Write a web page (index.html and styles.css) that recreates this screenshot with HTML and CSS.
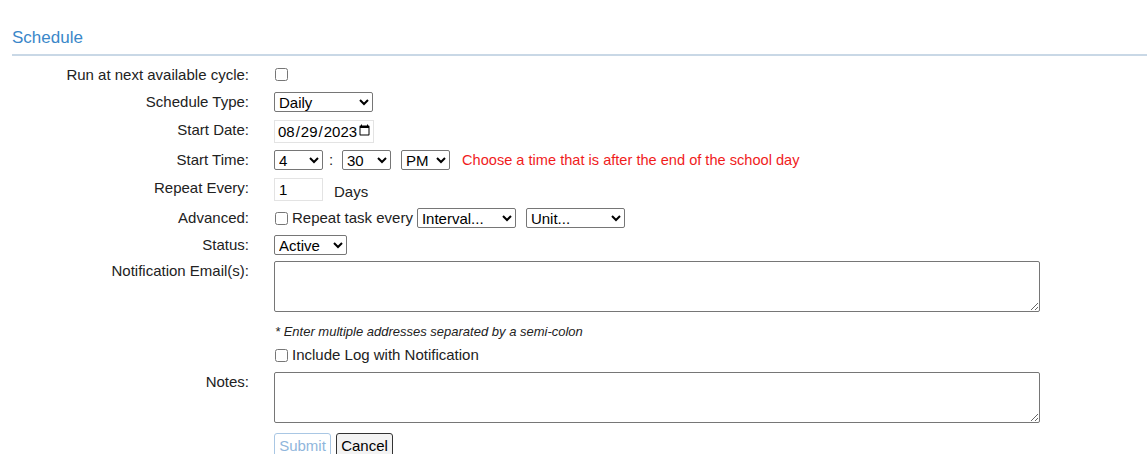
FILE: index.html
```html
<!DOCTYPE html>
<html lang="en">
<head>
    <meta charset="UTF-8">
    <title>Schedule</title>
    <link rel="stylesheet" href="styles.css">
</head>
<body>
  <div class="title">Schedule</div>
  <form class="form">
    <div class="row h27">
      <label class="label">Run at next available cycle:</label>
      <div class="field"><input type="checkbox" class="check"></div>
    </div>
    <div class="row h28">
      <label class="label">Schedule Type:</label>
      <div class="field">
        <select class="sel w99">
          <option>Daily</option>
          <option>Weekly</option>
          <option>Monthly</option>
        </select>
      </div>
    </div>
    <div class="row h30">
      <label class="label">Start Date:</label>
      <div class="field"><input type="date" class="date" value="2023-08-29"></div>
    </div>
    <div class="row h28">
      <label class="label">Start Time:</label>
      <div class="field">
        <select class="sel w49"><option>4</option></select>
        <span class="colon">:</span>
        <select class="sel w49"><option>30</option></select>
        <select class="sel w49 ml10"><option>PM</option></select>
        <span class="warn">Choose a time that is after the end of the school day</span>
      </div>
    </div>
    <div class="row h30">
      <label class="label">Repeat Every:</label>
      <div class="field">
        <input type="text" class="num" value="1">
        <span class="unit">Days</span>
      </div>
    </div>
    <div class="row h27">
      <label class="label">Advanced:</label>
      <div class="field">
        <input type="checkbox" class="check mid">
        <span class="inline">Repeat task every</span>
        <select class="sel w99"><option>Interval...</option></select>
        <select class="sel w99 ml10"><option>Unit...</option></select>
      </div>
    </div>
    <div class="row h26">
      <label class="label">Status:</label>
      <div class="field">
        <select class="sel w73"><option>Active</option><option>Inactive</option></select>
      </div>
    </div>
    <div class="row h61">
      <label class="label">Notification Email(s):</label>
      <div class="field"><textarea class="area"></textarea></div>
    </div>
    <div class="row h24">
      <span class="label"></span>
      <div class="field hint">* Enter multiple addresses separated by a semi-colon</div>
    </div>
    <div class="row h26">
      <span class="label"></span>
      <div class="field">
        <input type="checkbox" class="check">
        <span class="inline">Include Log with Notification</span>
      </div>
    </div>
    <div class="row h61">
      <label class="label">Notes:</label>
      <div class="field"><textarea class="area"></textarea></div>
    </div>
    <div class="row">
      <span class="label"></span>
      <div class="field">
        <button type="button" class="btn submit" disabled>Submit</button>
        <button type="button" class="btn cancel">Cancel</button>
      </div>
    </div>
  </form>
</body>
</html>
```

FILE: styles.css
```css
* {
  box-sizing: border-box;
}
body {
  margin: 0;
  font-family: "Liberation Sans", Arial, sans-serif;
  font-size: 15px;
  color: #222;
  background: #fff;
}
.title {
  margin-left: 12px;
  padding-top: 28px;
  padding-bottom: 6px;
  line-height: 20px;
  font-size: 17px;
  color: #3a87c9;
  border-bottom: 2px solid #c9d8e6;
}
.form {
  margin-top: 9px;
}
.row {
  display: flex;
  align-items: flex-start;
}
.h24 {
  height: 24px;
}
.h26 {
  height: 26px;
}
.h27 {
  height: 27px;
}
.h28 {
  height: 28px;
}
.h30 {
  height: 30px;
}
.h61 {
  height: 61px;
}
.label {
  width: 249px;
  flex-shrink: 0;
  margin-right: 25px;
  padding-top: 1px;
  text-align: right;
  line-height: 18px;
}
.field {
  display: flex;
  align-items: center;
  line-height: 18px;
}
.check {
  width: 13px;
  height: 13px;
  margin: 3px 0 2px 1px;
  align-self: flex-start;
}
.check.mid {
  align-self: center;
  margin: 0 0 0 1px;
}
.sel {
  height: 20px;
  font-family: "Liberation Sans", Arial, sans-serif;
  font-size: 15px;
  color: #000;
  background: #fff;
  border: 1px solid #767676;
  border-radius: 2px;
  padding: 0;
}
.w99 {
  width: 99px;
}
.w49 {
  width: 49px;
}
.w73 {
  width: 73px;
}
.ml10 {
  margin-left: 10px;
}
.colon {
  width: 19px;
  text-align: center;
  padding-right: 3px;
}
.warn {
  margin-left: 12px;
  font-size: 14.6px;
  color: #f01c1c;
}
.date {
  width: 100px;
  height: 23px;
  padding: 0 2px;
  font-family: "Liberation Sans", Arial, sans-serif;
  font-size: 15px;
  color: #000;
  border: 1px solid #e3e3e3;
}
.date::-webkit-datetime-edit,
.date::-webkit-datetime-edit-fields-wrapper {
  padding: 0;
}
.date::-webkit-calendar-picker-indicator {
  margin: 0;
  padding: 0;
  width: 13px;
}
.num {
  width: 49px;
  height: 23px;
  padding: 0 4px;
  font-family: "Liberation Sans", Arial, sans-serif;
  font-size: 15px;
  color: #000;
  border: 1px solid #e3e3e3;
}
.unit {
  margin-left: 11px;
  padding-top: 4px;
}
.inline {
  margin-left: 4px;
  margin-right: 4px;
}
.area {
  display: block;
  width: 766px;
  height: 51px;
  border: 1px solid #767676;
  border-radius: 2px;
}
.hint {
  margin-left: 1px;
  padding-top: 2px;
  font-size: 13px;
  font-style: italic;
  line-height: 16px;
}
.btn {
  width: 57px;
  height: 24px;
  padding: 0;
  font-family: "Liberation Sans", Arial, sans-serif;
  font-size: 15px;
  border-radius: 3px;
}
.submit {
  color: #8fb6dc;
  background: #fff;
  border: 1px solid #a9c7e4;
}
.cancel {
  margin-left: 5px;
  color: #000;
  background: #f3f3f3;
  border: 1px solid #333;
}
```
